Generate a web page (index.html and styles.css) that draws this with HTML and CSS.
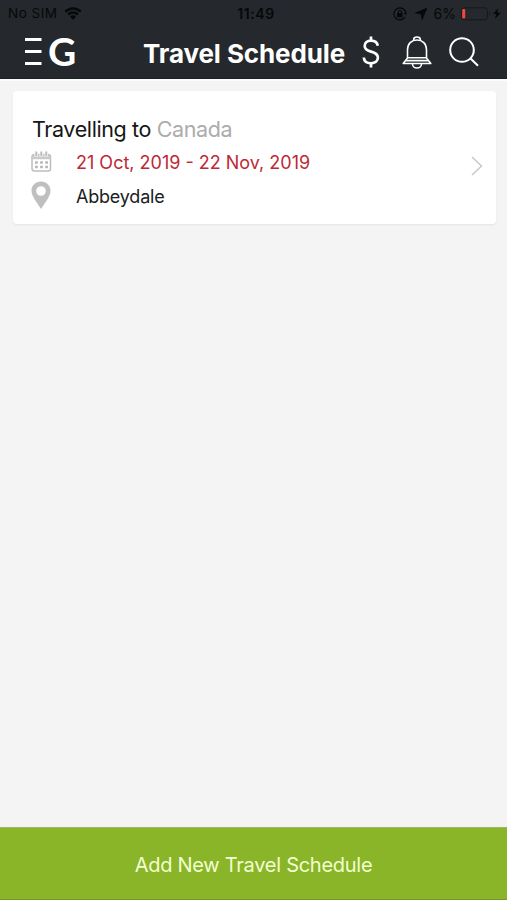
FILE: index.html
```html
<!DOCTYPE html>
<html lang="en">
<head>
<meta charset="utf-8">
<title>Travel Schedule</title>
<link rel="stylesheet" href="styles.css">
</head>
<body>
<div class="app">
  <header class="header">
    <div class="status">
      <div class="status-left">
        <span class="carrier">No SIM</span>
        <svg class="wifi" width="18" height="13" viewBox="0 0 18 13"><path d="M1.3 4.7a11 11 0 0 1 15.4 0M4.1 7.5a7 7 0 0 1 9.8 0" fill="none" stroke="currentColor" stroke-width="2.5"/><path d="M9 12.7L6 9.8a4.3 4.3 0 0 1 6 0z" fill="currentColor"/></svg>
      </div>
      <span class="clock">11:49</span>
      <div class="status-right">
        <svg width="14" height="14" viewBox="0 0 14 14"><path d="M12 10.2A6 6 0 1 1 12.9 6" fill="none" stroke="currentColor" stroke-width="1.2"/><path d="M11 5.8h3l-1.4 2.5z" fill="currentColor"/><rect x="4" y="6" width="5.6" height="4.2" rx=".6" fill="currentColor"/><path d="M5.2 6.2V5a1.6 1.6 0 0 1 3.2 0v1.2" fill="none" stroke="currentColor"/></svg>
        <svg class="location" width="12" height="12" viewBox="0 0 12 12"><path d="M12 0L7 11.8 6 6 .2 5z" fill="currentColor" stroke="currentColor" stroke-width=".5"/></svg>
        <span class="percent">6%</span>
        <svg class="battery" width="31" height="14" viewBox="0 0 31 14"><rect x=".5" y=".8" width="26" height="12" rx="3" fill="none" stroke="#16191b"/><rect x="1.2" y="2" width="3" height="9.6" rx="1" fill="#f2493f"/><path d="M28.3 4.6q2 2.2 0 4.4z" fill="#16191b"/></svg>
        <svg class="bolt" width="8" height="11" viewBox="0 0 8 11"><path d="M5.3 0L0 6h3.2L2 11l5.8-6.3H4.4z" fill="currentColor"/></svg>
      </div>
    </div>
    <nav class="nav">
      <svg class="menu" width="17" height="28" viewBox="0 0 17 28"><path d="M0 2.500h16.500M0 14.500h16.500M0 26.500h16.500" stroke="#fff" stroke-width="3"/></svg>
      <span class="logo">G</span>
      <h1 class="title">Travel Schedule</h1>
      <svg class="dollar" width="18" height="32" viewBox="0 0 18 32"><path d="M15.8 9.8C15.2 6.4 12.7 4.7 9 4.7c-3.7 0-6.3 2-6.3 5.2 0 3.4 2.6 4.7 6.3 5.7 4.3 1.1 6.9 2.5 6.9 6 0 3.6-2.8 5.7-6.9 5.7-4.3 0-6.9-2.2-7.2-5.800M9 .5V5M9 27v4.500" fill="none" stroke="#fff" stroke-width="2.700"/></svg>
      <svg class="bell" width="30" height="33" viewBox="0 0 30 33"><g fill="none" stroke="#fff" stroke-width="1.600" stroke-linejoin="round"><path d="M5.500 22v-8.200C5.500 7.700 9.500 4 15 4s9.500 3.700 9.500 9.800V22l4.300 5.500H1.200L5.500 22zM5.500 21.800h19M3.500 24.600h23"/><path d="M11.700 4.200V3.500a3.300 2.500 0 0 1 6.600 0v.7M10.500 28a4.500 4 0 0 0 9 0"/></g></svg>
      <svg class="search" width="30" height="30" viewBox="0 0 30 30"><g fill="none" stroke="#fff" stroke-width="2"><circle cx="13" cy="13" r="11.800"/><path d="M21.300 21.300l7.700 7.500"/></g></svg>
    </nav>
  </header>
  <main class="content">
    <article class="card">
      <div class="details">
        <h2 class="destination"><span>Travelling to</span> <span class="country">Canada</span></h2>
        <div class="row">
          <svg class="calendar" width="21" height="21" viewBox="0 0 21 21"><rect x="1" y="3.500" width="18.500" height="16.500" rx="2.500" fill="#fff" stroke="#bdbdbd" stroke-width="1.500"/><path d="M1 6a2 2 0 0 1 2-2h14.500a2 2 0 0 1 2 2v2.200H1z" fill="#cacaca"/><path d="M5.300 1v4.500M10.300 1v4.500M15.300 1v4.500" stroke="#fff" stroke-width="3.600"/><path d="M5.300.5V5M10.300.5V5M15.300.5V5" stroke="#bcbcbc" stroke-width="2"/><path d="M4 11.500h13M4 16h13" stroke="#b8b8b8" stroke-width="2.500" stroke-dasharray="2.800 2.300"/></svg>
          <span class="dates">21 Oct, 2019 - 22 Nov, 2019</span>
        </div>
        <div class="row">
          <svg class="pin" width="21" height="29" viewBox="0 0 21 29"><path fill-rule="evenodd" d="M10 .5C4.500.5.500 4.600.500 9.700c0 5.300 4.500 10.300 9.500 18.300 5-8 9.500-13 9.500-18.300C19.500 4.600 15.500.5 10 .5zm0 4.700a4.800 4.800 0 1 1 0 9.600 4.800 4.800 0 0 1 0-9.600z" fill="#bfbfbf"/></svg>
          <span class="place">Abbeydale</span>
        </div>
      </div>
      <svg class="chevron" width="12" height="20" viewBox="0 0 12 20"><path d="M1 1l9.500 9L1 19" fill="none" stroke="#c8c8c8" stroke-width="1.500"/></svg>
    </article>
  </main>
  <button class="add"><span>Add New Travel Schedule</span></button>
</div>
</body>
</html>
```
FILE: styles.css
```css
* { box-sizing: border-box; }
body { margin: 0; font-family: Inter, "Liberation Sans", sans-serif; }
.app { height: 900px; display: flex; flex-direction: column; background: #f4f4f4; overflow: hidden; }
.header { height: 79px; background: #25282c; border-bottom: 1px solid #1e2124; }
.status { height: 27px; display: grid; grid-template-columns: 1fr auto 1fr; align-items: center; padding: 0 6px 0 8px; color: #070809; font-size: 13.5px; line-height: 27px; }
.status-left, .status-right { display: flex; align-items: center; }
.status-right { justify-content: flex-end; }
.carrier { letter-spacing: .5px; }
.wifi { margin-left: 6px; }
.clock { font-size: 14px; font-weight: 600; letter-spacing: .6px; padding-left: 3px; }
.location { margin-left: 8px; }
.percent { margin-left: 7px; font-size: 14px; }
.battery { margin-left: 5px; }
.bolt { margin-left: 1px; }
.nav { height: 51px; display: flex; align-items: center; padding-left: 25px; }
.nav svg { flex: none; }
.nav .menu { margin-bottom: 4px; }
.logo { width: 28px; margin: 0 0 4px 6px; color: #fff; font: 700 39px/50px Lato, sans-serif; }
.title { width: 202px; margin: 2px 0 0 67px; color: #fff; font-size: 26px; line-height: 32px; font-weight: 700; letter-spacing: -.1px; white-space: nowrap; }
.nav .dollar { margin: 0 0 2px 17px; }
.nav .bell { margin: 0 0 1px 22px; }
.nav .search { margin: 0 0 2px 17px; }
.content { flex: 1; padding: 12px 11px 0 13px; border-top: 2px solid #fafbfb; }
.card { height: 133px; margin-top: -2px; padding: 25px 13px 0 18px; display: flex; background: #fff; border-radius: 4px; box-shadow: 0 1px 2px #e4e4e4; }
.details { flex: 1; }
.destination { margin: 0 0 5px 1px; font-size: 21.5px; line-height: 27px; font-weight: 400; letter-spacing: -.38px; color: #161616; white-space: nowrap; }
.country { color: #acacac; }
.row { height: 29px; display: flex; align-items: center; gap: 24px; margin-bottom: 5px; font-size: 18px; white-space: nowrap; }
.calendar, .pin { margin-bottom: 2px; }
.dates { color: #bd2936; }
.place { color: #202020; letter-spacing: -.2px; }
.chevron { margin-top: 40px; }
.add { height: 73px; padding: 2px 0 0; border: 0; border-top: 1px solid #9cb765; border-bottom: 1px solid #75942e; background: #8ab528; color: #f2ffd2; font: 400 20px/28px Inter, sans-serif; letter-spacing: -.27px; }
```
